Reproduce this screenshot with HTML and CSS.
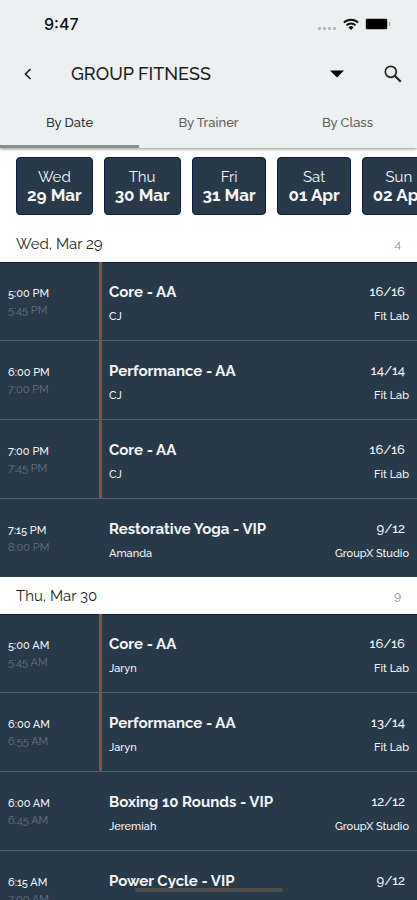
FILE: index.html
```html
<!DOCTYPE html>
<html lang="en">
<head>
<meta charset="utf-8">
<meta name="viewport" content="width=device-width, initial-scale=1">
<title>Group Fitness</title>
<link rel="stylesheet" href="styles.css">
</head>
<body>
<div class="app">
  <header class="top">
    <div class="status">
      <span class="clock">9:47</span>
      <span class="indicators">
        <svg class="signal" viewBox="0 0 19 4" aria-hidden="true"><g fill="#b4b7b8"><rect x="0" y="1" width="3" height="3" rx="1"/><rect x="5" y="1" width="3" height="3" rx="1"/><rect x="10" y="1" width="3" height="3" rx="1"/><rect x="15" y="1" width="3" height="3" rx="1"/></g></svg>
        <svg class="wifi" viewBox="0 0 16 12" aria-hidden="true"><g fill="none" stroke="#111" stroke-width="2"><path d="M.9 4.6a10 10 0 0 1 14.2 0"/><path d="M3.5 7.4a6.300 6.300 0 0 1 9 0"/></g><path d="M8 12 5.500 9.400a3.500 3.500 0 0 1 5 0z" fill="#111"/></svg>
        <svg class="battery" viewBox="0 0 26 12" aria-hidden="true"><rect x=".5" y=".5" width="22" height="11" rx="2" fill="none" stroke="#b4b7b8"/><rect x="1" y="1" width="21" height="10" rx="1" fill="#000"/><path d="M24 3.500q3 2.500 0 5z" fill="#a0a3a4"/></svg>
      </span>
    </div>
    <div class="bar">
      <button class="icon-btn" type="button" aria-label="Back"><svg class="back" viewBox="0 0 8 12"><path d="M6.500 1 1.500 6l5 5" fill="none" stroke="#222" stroke-width="1.700"/></svg></button>
      <h1 class="title">GROUP FITNESS</h1>
      <button class="icon-btn" type="button" aria-label="Choose category"><svg class="caret" viewBox="0 0 14 8"><path d="M0 .5h14L7 7.500z" fill="#000"/></svg></button>
      <button class="icon-btn" type="button" aria-label="Search"><svg class="search" viewBox="0 0 18 18"><circle cx="6.800" cy="6.800" r="5.500" fill="none" stroke="#222" stroke-width="1.700"/><path d="m10.800 10.800 6 6" stroke="#222" stroke-width="2.200"/></svg></button>
    </div>
    <nav class="tabs">
      <a class="tab tab-active" href="#date">By Date</a>
      <a class="tab" href="#trainer">By Trainer</a>
      <a class="tab" href="#class">By Class</a>
    </nav>
  </header>

  <div class="dates">
    <button class="date" type="button"><span>Wed</span><strong>29 Mar</strong></button>
    <button class="date" type="button"><span>Thu</span><strong>30 Mar</strong></button>
    <button class="date" type="button"><span>Fri</span><strong>31 Mar</strong></button>
    <button class="date" type="button"><span>Sat</span><strong>01 Apr</strong></button>
    <button class="date" type="button"><span>Sun</span><strong>02 Apr</strong></button>
  </div>

  <main class="schedule">
    <section>
      <div class="day"><h2>Wed, Mar 29</h2><span class="count">4</span></div>
      <ul class="classes">
        <li class="row marked"><div class="times"><span>5:00 PM</span><span class="end">5:45 PM</span></div><div class="info"><h3>Core - AA</h3><span>CJ</span></div><div class="place"><span class="spots">16/16</span><span>Fit Lab</span></div></li>
        <li class="row marked"><div class="times"><span>6:00 PM</span><span class="end">7:00 PM</span></div><div class="info"><h3>Performance - AA</h3><span>CJ</span></div><div class="place"><span class="spots">14/14</span><span>Fit Lab</span></div></li>
        <li class="row marked"><div class="times"><span>7:00 PM</span><span class="end">7:45 PM</span></div><div class="info"><h3>Core - AA</h3><span>CJ</span></div><div class="place"><span class="spots">16/16</span><span>Fit Lab</span></div></li>
        <li class="row"><div class="times"><span>7:15 PM</span><span class="end">8:00 PM</span></div><div class="info"><h3>Restorative Yoga - VIP</h3><span>Amanda</span></div><div class="place"><span class="spots">9/12</span><span>GroupX Studio</span></div></li>
      </ul>
    </section>
    <section>
      <div class="day"><h2>Thu, Mar 30</h2><span class="count">9</span></div>
      <ul class="classes">
        <li class="row marked"><div class="times"><span>5:00 AM</span><span class="end">5:45 AM</span></div><div class="info"><h3>Core - AA</h3><span>Jaryn</span></div><div class="place"><span class="spots">16/16</span><span>Fit Lab</span></div></li>
        <li class="row marked"><div class="times"><span>6:00 AM</span><span class="end">6:55 AM</span></div><div class="info"><h3>Performance - AA</h3><span>Jaryn</span></div><div class="place"><span class="spots">13/14</span><span>Fit Lab</span></div></li>
        <li class="row"><div class="times"><span>6:00 AM</span><span class="end">6:45 AM</span></div><div class="info"><h3>Boxing 10 Rounds - VIP</h3><span>Jeremiah</span></div><div class="place"><span class="spots">12/12</span><span>GroupX Studio</span></div></li>
        <li class="row"><div class="times"><span>6:15 AM</span><span class="end">7:00 AM</span></div><div class="info"><h3>Power Cycle - VIP</h3><span>Laura</span></div><div class="place"><span class="spots">9/12</span><span>Cycle Studio</span></div></li>
      </ul>
    </section>
  </main>
  <div class="home-indicator"></div>
</div>
</body>
</html>
```
FILE: styles.css
```css
* { box-sizing: border-box; }

body {
  margin: 0;
  background: #fff;
  color: #1c1f21;
  font-family: Raleway, Lato, "Open Sans", sans-serif;
  font-variant-numeric: oldstyle-nums;
}

h1, h2, h3, ul { margin: 0; padding: 0; }
ul { list-style: none; }
button { font: inherit; border: 0; cursor: pointer; }
svg { display: block; }

.app {
  height: 100vh;
  display: flex;
  flex-direction: column;
  overflow: hidden;
}

.top {
  flex: none;
  background: #ecf0f1;
  box-shadow: 0 1px 3px rgba(0, 0, 0, .45);
  z-index: 1;
}

.status {
  height: 48px;
  padding: 0 26px 0 44px;
  display: flex;
  align-items: center;
  justify-content: space-between;
}

.clock {
  font: 500 16px/24px Inter, sans-serif;
  color: #111;
}

.indicators { display: flex; align-items: center; gap: 6px; }
.signal { width: 19px; height: 4px; margin-top: 8px; }
.wifi { width: 16px; height: 12px; }
.battery { width: 26px; height: 12px; }

.bar {
  height: 52px;
  padding: 0 4px 0 8px;
  display: flex;
  align-items: center;
}

.icon-btn {
  width: 40px;
  height: 40px;
  padding: 0;
  display: grid;
  place-items: center;
  background: none;
}

.back { width: 8px; height: 12px; }
.caret { width: 14px; height: 8px; }
.search { width: 18px; height: 18px; }

.title {
  flex: 1;
  padding-left: 23px;
  font-size: 18px;
  line-height: 24px;
  font-weight: 500;
}

.icon-btn + .icon-btn { margin-left: 16px; }

.tabs { display: flex; height: 48px; }

.tab {
  flex: 1;
  border-bottom: 3px solid transparent;
  display: grid;
  place-items: center;
  font-size: 13px;
  font-weight: 500;
  color: #5b5f61;
  text-decoration: none;
}

.tab-active { color: #33373a; border-bottom-color: #8b8f90; }

.dates {
  flex: none;
  display: flex;
  gap: 11px;
  padding: 9px 16px 10px;
  overflow: hidden;
}

.date {
  flex: none;
  height: 58px;
  padding: 0 10px;
  border: 1px solid #10183f;
  border-radius: 4px;
  background: #28394a;
  color: #f4f6f7;
  display: flex;
  flex-direction: column;
  align-items: center;
  justify-content: center;
  font-size: 15px;
  line-height: 18px;
}

.date strong { font-size: 17px; font-weight: 700; }

.schedule { flex: 1; min-height: 0; overflow: hidden; }

.day {
  height: 37px;
  padding: 0 16px;
  display: flex;
  align-items: center;
  justify-content: space-between;
}

.day h2 { font-size: 15px; font-weight: 400; }
.count { font-size: 12px; color: #85898b; }

.classes {
  background: #28394a;
  color: #f2f4f5;
  box-shadow: inset 0 1px #10183a;
}

.row {
  height: 78px;
  display: grid;
  grid-template-columns: 102px 1fr auto;
}

.row + .row { height: 79px; border-top: 1px solid #51606e; }

.times, .info, .place { display: flex; flex-direction: column; }

.times {
  padding: 23px 0 0 8px;
  border-right: 3px solid transparent;
}

.times span {
  font-size: 11px;
  line-height: 17px;
  font-weight: 500;
}

.times .end { color: #647280; font-weight: 400; }
.marked .times { border-right-color: #86513f; }

.info { padding: 20px 0 0 7px; gap: 7px; }
.info h3 { font-size: 15px; line-height: 20px; font-weight: 700; }

.place { padding: 20px 8px 0 0; gap: 7px; align-items: flex-end; }

.info span, .place span {
  font-size: 11px;
  line-height: 16px;
  font-weight: 500;
}

.place .spots { padding-right: 4px; font-size: 13px; line-height: 20px; }

.home-indicator {
  position: fixed;
  bottom: 8px;
  left: 50%;
  width: 148px;
  height: 4px;
  margin-left: -74px;
  border-radius: 2px;
  background: #50504f;
}
```
